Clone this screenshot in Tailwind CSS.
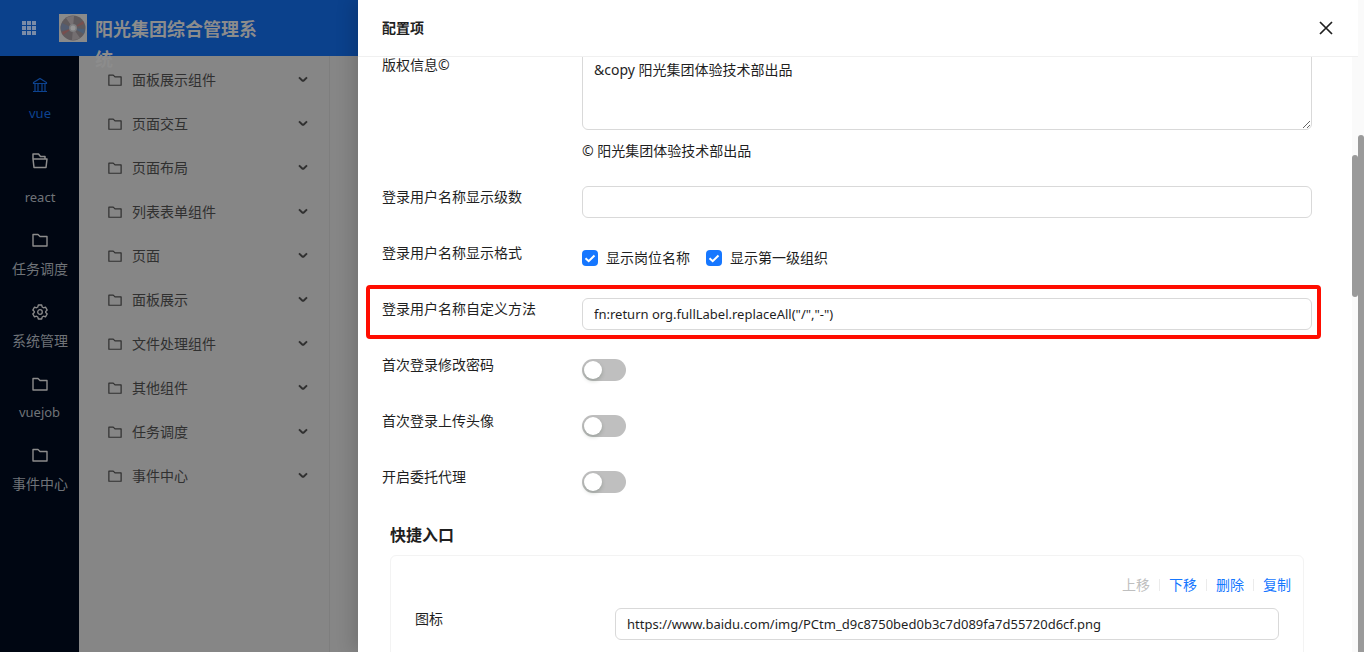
<!DOCTYPE html>
<html lang="zh-CN">
<head>
    <meta charset="UTF-8">
    <meta name="viewport" content="width=device-width, initial-scale=1.0">
    <title>阳光集团综合管理系统</title>
    <script src="https://cdn.jsdelivr.net/npm/@tailwindcss/browser@4"></script>
</head>
<body class="h-screen overflow-hidden bg-[#868686] text-sm text-[#1f1f1f] font-['Noto_Sans','Noto_Sans_CJK_SC',sans-serif]">
    <svg class="hidden">
        <symbol id="folder" viewBox="0 0 16 16"><path d="M1 2.500h5l2 2h7v9.500H1z" fill="none" stroke="currentColor" stroke-width="1.400" stroke-linejoin="round"/></symbol>
        <symbol id="chevron" viewBox="0 0 10 10"><path d="M1 2.300L4.200 5.500Q5 6.200 5.800 5.500L9 2.300" fill="none" stroke="currentColor" stroke-width="1.900"/></symbol>
    </svg>
    <div class="flex h-full">
        <!-- 遮罩下的页面 -->
        <div class="w-[358px] shrink-0 h-full flex flex-col">
            <header class="h-14 shrink-0 flex items-start pl-[21px] pt-[14px] bg-[#0b418c] text-[#8c8c8c]">
                <button class="w-4 h-7 flex items-center" aria-label="应用">
                    <svg class="size-4" viewBox="0 0 16 16" fill="#7b8ca8"><path d="M1 1h4v4H1zM6 1h4v4H6zM11 1h4v4h-4zM1 6h4v4H1zM6 6h4v4H6zM11 6h4v4h-4zM1 11h4v4H1zM6 11h4v4H6zM11 11h4v4h-4z"/></svg>
                </button>
                <svg class="size-7 ml-[22px] shrink-0" viewBox="0 0 28 28">
                    <path fill="#8a8a8a" d="M0 0h28v28H0z"/>
                    <circle cx="14" cy="14" r="12.5" fill="#5f5a5d"/>
                    <path d="M14 14L7 4a12 12 0 0 1 8-2z" fill="#777173"/>
                    <path d="M14 14l7 10a12 12 0 0 1-8 2z" fill="#736e70"/>
                    <path d="M14 14L2 17a12 12 0 0 1 1-8z" fill="#535c70"/>
                    <path d="M14 14L4 21l-1-3z" fill="#784e4e"/>
                    <path d="M14 14l10-7 1 3z" fill="#78504f"/>
                    <path d="M14 14l12 1-1 5z" fill="#4e5f74"/>
                    <circle cx="14" cy="14" r="4" fill="#7d7d7f"/>
                    <circle cx="14" cy="14" r="2.5" fill="#969696"/>
                </svg>
                <h1 class="ml-2 w-44 text-lg leading-[30px] font-bold">阳光集团综合管理系统</h1>
            </header>
            <div class="flex flex-1 min-h-0">
                <nav class="w-[79px] shrink-0 bg-[#000612] text-[#6f7378] leading-5">
                    <ul>
                        <li><a href="#" class="flex flex-col items-center gap-[10px] pt-[21px] pb-[30px] pl-px text-[13px] text-[#0d4390]">
                            <svg class="size-4" viewBox="0 0 16 16" fill="none" stroke="currentColor" stroke-width="1.2"><path d="M1.5 5.5L8 1.5l6.5 4v1h-13zM3 6.5V14M6 6.5V14M10 6.5V14M13 6.5V14M1 14.5h14"/></svg>vue</a></li>
                        <li><a href="#" class="flex flex-col items-center gap-[18px] pb-[25px] pl-px text-[13px]">
                            <svg class="size-4 text-[#8c8c8c]" viewBox="0 0 16 16" fill="none" stroke="currentColor" stroke-width="1.5" stroke-linejoin="round"><path d="M1 6h14l-1 8.5H2zM1 6V1h5.5l2 2.500H13V6"/></svg>react</a></li>
                        <li><a href="#" class="flex flex-col items-center gap-[11px] pb-[25px] pl-px"><svg class="size-4 text-[#8c8c8c]"><use href="#folder"/></svg>任务调度</a></li>
                        <li><a href="#" class="flex flex-col items-center gap-[11px] pb-[25px] pl-px">
                            <svg class="size-4 text-[#8c8c8c]" viewBox="0 0 16 16" fill="none" stroke="currentColor" stroke-width="1.3" stroke-linejoin="round"><path d="M6.3 1h3.4l.5 2 1.3.8 2-.6 1.7 2.9-1.5 1.4v1l1.5 1.4-1.7 2.9-2-.6-1.3.8-.5 2H6.3l-.5-2-1.3-.8-2 .6L.8 9.900l1.500-1.400v-1L.8 6.100l1.700-2.900 2 .6L5.800 3z"/><circle cx="8" cy="8" r="2.3"/></svg>系统管理</a></li>
                        <li><a href="#" class="flex flex-col items-center gap-[10px] pb-[25px] text-[13px]"><svg class="size-4 text-[#8c8c8c]"><use href="#folder"/></svg>vuejob</a></li>
                        <li><a href="#" class="flex flex-col items-center gap-[11px] pl-px"><svg class="size-4 text-[#8c8c8c]"><use href="#folder"/></svg>事件中心</a></li>
                    </ul>
                </nav>
                <nav class="w-[251px] shrink-0 border-r border-[#7e7e7e] pt-0.5 text-[#303030]">
                    <ul>
                        <li><a href="#" class="flex items-center h-11 pl-[29px] pr-[21px] gap-[10px]"><svg class="size-[14px]"><use href="#folder"/></svg><span class="flex-1">面板展示组件</span><svg class="size-[10px]"><use href="#chevron"/></svg></a></li>
                        <li><a href="#" class="flex items-center h-11 pl-[29px] pr-[21px] gap-[10px]"><svg class="size-[14px]"><use href="#folder"/></svg><span class="flex-1">页面交互</span><svg class="size-[10px]"><use href="#chevron"/></svg></a></li>
                        <li><a href="#" class="flex items-center h-11 pl-[29px] pr-[21px] gap-[10px]"><svg class="size-[14px]"><use href="#folder"/></svg><span class="flex-1">页面布局</span><svg class="size-[10px]"><use href="#chevron"/></svg></a></li>
                        <li><a href="#" class="flex items-center h-11 pl-[29px] pr-[21px] gap-[10px]"><svg class="size-[14px]"><use href="#folder"/></svg><span class="flex-1">列表表单组件</span><svg class="size-[10px]"><use href="#chevron"/></svg></a></li>
                        <li><a href="#" class="flex items-center h-11 pl-[29px] pr-[21px] gap-[10px]"><svg class="size-[14px]"><use href="#folder"/></svg><span class="flex-1">页面</span><svg class="size-[10px]"><use href="#chevron"/></svg></a></li>
                        <li><a href="#" class="flex items-center h-11 pl-[29px] pr-[21px] gap-[10px]"><svg class="size-[14px]"><use href="#folder"/></svg><span class="flex-1">面板展示</span><svg class="size-[10px]"><use href="#chevron"/></svg></a></li>
                        <li><a href="#" class="flex items-center h-11 pl-[29px] pr-[21px] gap-[10px]"><svg class="size-[14px]"><use href="#folder"/></svg><span class="flex-1">文件处理组件</span><svg class="size-[10px]"><use href="#chevron"/></svg></a></li>
                        <li><a href="#" class="flex items-center h-11 pl-[29px] pr-[21px] gap-[10px]"><svg class="size-[14px]"><use href="#folder"/></svg><span class="flex-1">其他组件</span><svg class="size-[10px]"><use href="#chevron"/></svg></a></li>
                        <li><a href="#" class="flex items-center h-11 pl-[29px] pr-[21px] gap-[10px]"><svg class="size-[14px]"><use href="#folder"/></svg><span class="flex-1">任务调度</span><svg class="size-[10px]"><use href="#chevron"/></svg></a></li>
                        <li><a href="#" class="flex items-center h-11 pl-[29px] pr-[21px] gap-[10px]"><svg class="size-[14px]"><use href="#folder"/></svg><span class="flex-1">事件中心</span><svg class="size-[10px]"><use href="#chevron"/></svg></a></li>
                    </ul>
                </nav>
            </div>
        </div>
        <!-- 配置抽屉 -->
        <section class="flex-1 min-w-0 flex flex-col bg-white shadow-[-6px_0_16px_rgba(0,0,0,0.14)]">
            <header class="h-[57px] shrink-0 flex items-center justify-between pl-6 pr-[25px] border-b border-[#f0f0f0]">
                <h2 class="font-bold">配置项</h2>
                <button aria-label="关闭"><svg class="size-[14px]" viewBox="0 0 14 14"><path d="M1 1l12 12M13 1L1 13" stroke="#1f1f1f" stroke-width="1.7"/></svg></button>
            </header>
            <div class="flex-1 min-h-0 flex">
                <form class="flex-1 min-w-0 overflow-hidden pl-2 pr-[31px]">
                    <div class="flex h-[117px] items-end pl-4 pr-[9px]">
                        <label for="copyright" class="w-[200px] shrink-0 self-start -mt-0.5 leading-5">版权信息©</label>
                        <div class="flex-1">
                            <textarea id="copyright" class="block w-full h-[98px] border border-[#d9d9d9] rounded-md px-[11px] pt-[26px] leading-[22px] resize-y">&amp;copy 阳光集团体验技术部出品</textarea>
                            <p class="mt-[10px] h-[34px] leading-[22px]">© 阳光集团体验技术部出品</p>
                        </div>
                    </div>
                    <div class="flex h-14 mt-3 pl-4 pr-[9px]">
                        <label for="level" class="w-[200px] shrink-0 leading-[22px]">登录用户名称显示级数</label>
                        <input id="level" type="text" class="flex-1 h-8 border border-[#d9d9d9] rounded-md px-[11px] text-[13px]">
                    </div>
                    <fieldset class="flex h-14 pl-4">
                        <span class="w-[200px] shrink-0 leading-[22px]">登录用户名称显示格式</span>
                        <span class="flex gap-4 h-8 items-center">
                            <label class="flex items-center gap-2"><span class="relative flex"><input type="checkbox" checked class="appearance-none size-4 rounded-sm bg-[#1677ff]"><svg class="absolute inset-0 size-4 pointer-events-none" viewBox="0 0 16 16"><path d="M3.500 8.200l3.200 3L12.500 5.500" fill="none" stroke="#fff" stroke-width="2"/></svg></span>显示岗位名称</label>
                            <label class="flex items-center gap-2"><span class="relative flex"><input type="checkbox" checked class="appearance-none size-4 rounded-sm bg-[#1677ff]"><svg class="absolute inset-0 size-4 pointer-events-none" viewBox="0 0 16 16"><path d="M3.500 8.200l3.200 3L12.500 5.500" fill="none" stroke="#fff" stroke-width="2"/></svg></span>显示第一级组织</label>
                        </span>
                    </fieldset>
                    <div class="flex h-[54px] -mt-[13px] border-4 border-[#ff0d00] rounded-sm pl-3 pr-[5px] pt-[9px]">
                        <label for="method" class="w-[200px] shrink-0 leading-[22px]">登录用户名称自定义方法</label>
                        <input id="method" type="text" value="fn:return org.fullLabel.replaceAll(&quot;/&quot;,&quot;-&quot;)" class="flex-1 h-8 border border-[#d9d9d9] rounded-md px-[11px] text-[13px]">
                    </div>
                    <div class="flex h-14 mt-[15px] pl-4">
                        <label for="pwd" class="w-[200px] shrink-0 leading-[22px]">首次登录修改密码</label>
                        <button id="pwd" type="button" role="switch" aria-checked="false" class="mt-[5px] w-11 h-[22px] rounded-full bg-[#bfbfbf] p-0.5"><span class="block size-[18px] rounded-full bg-white shadow-[0_2px_4px_rgba(0,35,11,0.2)]"></span></button>
                    </div>
                    <div class="flex h-14 pl-4">
                        <label for="avatar" class="w-[200px] shrink-0 leading-[22px]">首次登录上传头像</label>
                        <button id="avatar" type="button" role="switch" aria-checked="false" class="mt-[5px] w-11 h-[22px] rounded-full bg-[#bfbfbf] p-0.5"><span class="block size-[18px] rounded-full bg-white shadow-[0_2px_4px_rgba(0,35,11,0.2)]"></span></button>
                    </div>
                    <div class="flex h-14 pl-4">
                        <label for="agent" class="w-[200px] shrink-0 leading-[22px]">开启委托代理</label>
                        <button id="agent" type="button" role="switch" aria-checked="false" class="mt-[5px] w-11 h-[22px] rounded-full bg-[#bfbfbf] p-0.5"><span class="block size-[18px] rounded-full bg-white shadow-[0_2px_4px_rgba(0,35,11,0.2)]"></span></button>
                    </div>
                    <h3 class="pt-px pl-6 text-base leading-6 font-bold">快捷入口</h3>
                    <div class="ml-6 mr-[17px] mt-2 h-44 border border-[#f3f3f3] rounded-md pl-6 pr-3 pt-[18px]">
                        <div class="flex justify-end items-center leading-[22px] text-[#1677ff]">
                            <button type="button" disabled class="text-[#bfbfbf]">上移</button>
                            <span class="mx-[9px] w-px h-3 bg-[#ebebeb]"></span>
                            <button type="button">下移</button>
                            <span class="mx-[9px] w-px h-3 bg-[#ebebeb]"></span>
                            <button type="button">删除</button>
                            <span class="mx-[9px] w-px h-3 bg-[#ebebeb]"></span>
                            <button type="button">复制</button>
                        </div>
                        <div class="flex mt-3 pr-3">
                            <label for="icon" class="w-[200px] shrink-0 leading-[22px]">图标</label>
                            <input id="icon" type="text" value="https://www.baidu.com/img/PCtm_d9c8750bed0b3c7d089fa7d55720d6cf.png" class="flex-1 h-8 border border-[#d9d9d9] rounded-md px-[11px] text-[13px]">
                        </div>
                    </div>
                </form>
                <div class="w-1.5 bg-[#fafafa]"><div class="mt-[98px] h-[142px] rounded-full bg-[#9a9a9a]"></div></div>
            </div>
        </section>
        <div class="w-1.5 bg-[#fafafa] pt-[135px]"><div class="h-full rounded-t-full bg-[#9a9a9a]"></div></div>
    </div>
</body>
</html>
